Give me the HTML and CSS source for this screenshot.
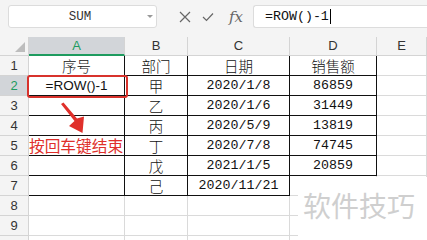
FILE: index.html
```html
<!DOCTYPE html>
<html lang="zh">
<head>
<meta charset="utf-8">
<link rel="stylesheet" href="styles.css">
</head>
<body>
<div class="app">
  <div class="toolbar">
    <div class="namebox"><span class="name">SUM</span><span class="drop"></span></div>
    <div class="tools">
      <svg class="ic-x" width="12" height="12" viewBox="0 0 12 12"><path d="M1 1 L11 11 M11 1 L1 11" stroke="#666" stroke-width="1.2" fill="none"/></svg>
      <svg class="ic-ok" width="12" height="10" viewBox="0 0 12 10"><path d="M1 5 L4.5 8.5 L11 1.5" stroke="#666" stroke-width="1.2" fill="none"/></svg>
      <span class="fx">fx</span>
    </div>
    <div class="formula"><span class="ftext">=ROW()-1</span><span class="caret"></span></div>
  </div>
  <div class="sheet">
    <div class="corner"><span class="tri"></span></div>
    <div class="ch sel">A</div><div class="ch">B</div><div class="ch">C</div><div class="ch">D</div><div class="ch">E</div>

    <div class="rh">1</div><div class="c t cj">序号</div><div class="c t cj">部门</div><div class="c t cj">日期</div><div class="c t cj">销售额</div><div class="c"></div>
    <div class="rh sel">2</div><div class="c t f">=ROW()-1</div><div class="c t cj">甲</div><div class="c t m">2020/1/8</div><div class="c t m">86859</div><div class="c"></div>
    <div class="rh">3</div><div class="c t"></div><div class="c t cj">乙</div><div class="c t m">2020/1/6</div><div class="c t m">31449</div><div class="c"></div>
    <div class="rh">4</div><div class="c t"></div><div class="c t cj">丙</div><div class="c t m">2020/5/9</div><div class="c t m">13819</div><div class="c"></div>
    <div class="rh">5</div><div class="c t note">按回车键结束</div><div class="c t cj">丁</div><div class="c t m">2020/7/8</div><div class="c t m">74745</div><div class="c"></div>
    <div class="rh">6</div><div class="c t"></div><div class="c t cj">戊</div><div class="c t m">2021/1/5</div><div class="c t m">20859</div><div class="c"></div>
    <div class="rh">7</div><div class="c t"></div><div class="c t cj">己</div><div class="c t m">2020/11/21</div><div class="c"></div><div class="c"></div>
    <div class="rh">8</div><div class="c"></div><div class="c"></div><div class="c"></div><div class="c"></div><div class="c"></div>
    <div class="rh">9</div><div class="c"></div><div class="c"></div><div class="c"></div><div class="c"></div><div class="c"></div>
    <div class="rh"></div><div class="c"></div><div class="c"></div><div class="c"></div><div class="c"></div><div class="c"></div>
  </div>

  <div class="redbox"></div>
  <svg class="arrow" width="427" height="240" viewBox="0 0 427 240">
    <polygon points="61,104 63.5,102.5 77,118.5 84,116.5 82.5,133 69,126 74.5,121" fill="#e0302b"/>
  </svg>
  <div class="watermark">软件技巧</div>
</div>
</body>
</html>
```
FILE: styles.css
```css
* { box-sizing: border-box; }
html, body { margin: 0; padding: 0; background: #fff; }
body { width: 427px; height: 240px; overflow: hidden; font-family: "Liberation Sans", Arial, sans-serif; }
.app { position: relative; width: 427px; height: 240px; overflow: hidden; }

.toolbar {
  height: 37px;
  background: #f4f4f4;
  display: flex;
  align-items: flex-start;
  padding: 5px 0 0 8px;
}
.namebox {
  width: 149px; height: 23px;
  background: #fff;
  border: 1px solid #dcdcdc;
  border-radius: 3px;
  display: flex; align-items: center;
}
.name {
  flex: 1;
  text-align: center;
  font-family: "Liberation Mono", monospace;
  font-size: 12.5px;
  color: #333;
  padding-left: 4px;
}
.drop {
  width: 0; height: 0;
  border-left: 3px solid transparent;
  border-right: 3px solid transparent;
  border-top: 3px solid #999;
  margin-right: 3px;
}
.tools {
  display: flex; align-items: center;
  height: 23px;
  padding-left: 22px;
  width: 96px;
}
.ic-x { margin-right: 11px; }
.ic-ok { margin-right: 15px; }
.fx {
  font-family: "DejaVu Serif", "Liberation Serif", serif;
  font-style: italic;
  font-size: 15px;
  color: #666;
}
.formula {
  flex: 1;
  height: 23px;
  background: #fff;
  border: 1px solid #dcdcdc;
  border-right: none;
  border-radius: 3px 0 0 3px;
  display: flex; align-items: center;
  padding-left: 11px;
}
.ftext { font-family: "Liberation Mono", monospace; font-size: 13.3px; color: #111; }
.caret { width: 1px; height: 15px; background: #000; margin-left: 1px; }

.sheet {
  display: grid;
  grid-template-columns: 29px 96px 63px 102px 87px 1fr;
  grid-template-rows: 19px repeat(10, 20px);
}
.corner {
  background: #f4f4f4;
  border-right: 1px solid #d4d4d4;
  border-bottom: 1px solid #d4d4d4;
  position: relative;
}
.tri {
  position: absolute; right: 3px; bottom: 3px;
  width: 0; height: 0;
  border-left: 10px solid transparent;
  border-bottom: 10px solid #bdbdbd;
}
.ch {
  background: #f4f4f4;
  border-right: 1px solid #d4d4d4;
  border-bottom: 1px solid #d4d4d4;
  text-align: center;
  line-height: 18px;
  font-size: 13px; color: #333;
}
.ch.sel {
  background: #d2d5d9;
  color: #1e9b5f;
  border-bottom: 2px solid #1e9b5f;
  line-height: 17px;
}
.rh {
  background: #f4f4f4;
  border-right: 1px solid #d4d4d4;
  border-bottom: 1px solid #d4d4d4;
  text-align: center;
  line-height: 19px;
  font-size: 13px; color: #333;
}
.rh.sel { background: #d2d5d9; color: #1e9b5f; }
.c {
  border-right: 1px solid #dadada;
  border-bottom: 1px solid #dadada;
  text-align: center;
  line-height: 19px;
  white-space: nowrap;
  color: #111;
}
.c.t { border-right-color: #111; border-bottom-color: #111; }
.cj { font-family: "Noto Sans CJK SC", sans-serif; font-size: 14.5px; font-weight: 300; }
.m { font-family: "Liberation Mono", monospace; font-size: 13.3px; }
.f { font-family: "Liberation Sans", Arial, sans-serif; font-size: 13.5px; }
.note {
  font-family: "Noto Sans CJK SC", sans-serif;
  font-size: 15.7px;
  color: #e0302b;
  text-align: left;
  overflow: visible;
}

.redbox {
  position: absolute;
  left: 27px; top: 75px;
  width: 101px; height: 23px;
  border: 2.5px solid #d8322c;
  border-radius: 3px;
}
.arrow { position: absolute; left: 0; top: 0; }
.watermark {
  position: absolute;
  left: 298px; top: 177px;
  width: 129px; height: 63px;
  background: #fff;
  font-family: "Noto Sans CJK SC", sans-serif;
  font-size: 28px;
  color: #cfcfcf;
  padding: 14px 0 0 5px;
  line-height: 1;
  white-space: nowrap;
}
```
